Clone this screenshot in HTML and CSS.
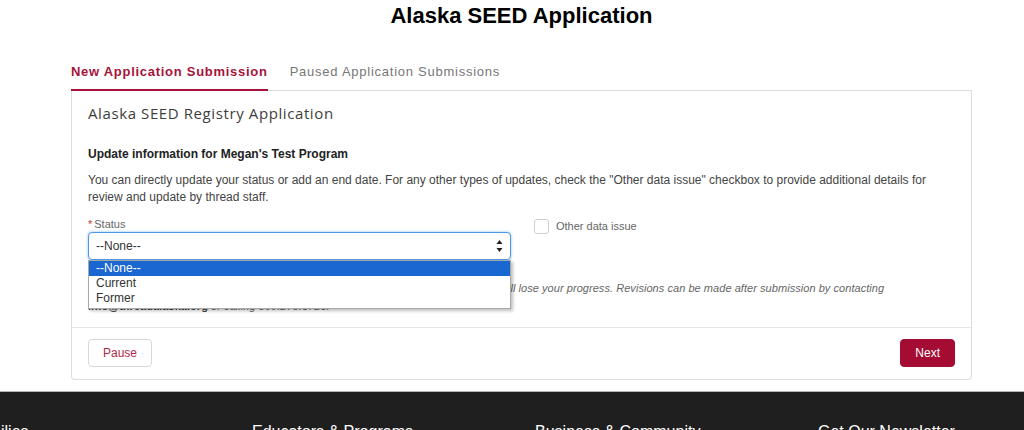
FILE: index.html
```html
<!DOCTYPE html>
<html lang="en">
<head>
<meta charset="utf-8">
<title>Alaska SEED Application</title>
<link rel="stylesheet" href="styles.css">
</head>
<body>
<div class="page">
  <h1 class="page-title">Alaska SEED Application</h1>
  <nav class="tabs">
    <a class="tab tab-active">New Application Submission</a>
    <a class="tab">Paused Application Submissions</a>
  </nav>
  <section class="card">
    <header class="card-header">
      <h2 class="card-title">Alaska SEED Registry Application</h2>
    </header>
    <div class="card-body">
      <h3 class="section-title">Update information for Megan's Test Program</h3>
      <p class="intro">You can directly update your status or add an end date. For any other types of updates, check the "Other data issue" checkbox to provide additional details for review and update by thread staff.</p>
      <div class="form-row">
        <div class="field">
          <div class="field-label"><span class="req">*</span>Status</div>
          <div class="select-wrap">
            <div class="select">
              <span>--None--</span>
              <svg class="select-arrows" width="7" height="14" viewBox="0 0 7 14"><path d="M3.5 1 L6.5 5 L0.5 5 Z" fill="#222"/><path d="M0.5 9 L6.5 9 L3.5 13 Z" fill="#222"/></svg>
            </div>
            <ul class="dropdown">
              <li class="option option-selected">--None--</li>
              <li class="option">Current</li>
              <li class="option">Former</li>
            </ul>
          </div>
        </div>
        <div class="field field-check">
          <span class="checkbox"></span>
          <span class="check-label">Other data issue</span>
        </div>
      </div>
      <p class="note">If you navigate away from the page before pausing or submitting the form, then you will lose your progress. Revisions can be made after submission by contacting <b>info@threadalaska.org</b> or calling 800.278.3723.</p>
    </div>
    <footer class="card-footer">
      <button class="btn btn-outline">Pause</button>
      <button class="btn btn-primary">Next</button>
    </footer>
  </section>
</div>
<footer class="site-footer">
  <div class="footer-cols">
    <div class="footer-col">Families</div>
    <div class="footer-col">Educators &amp; Programs</div>
    <div class="footer-col">Business &amp; Community</div>
    <div class="footer-col">Get Our Newsletter</div>
  </div>
</footer>
</body>
</html>
```

FILE: styles.css
```css
html, body {
  margin: 0;
  padding: 0;
  background: #fff;
  overflow: hidden;
}
body {
  font-family: "Liberation Sans", Arial, sans-serif;
  color: #444;
  width: 1024px;
  height: 430px;
}
.page {
  margin-left: 71px;
  width: 901px;
}
.page-title {
  margin: 0;
  padding-top: 3px;
  font-size: 22px;
  line-height: 26px;
  font-weight: bold;
  color: #000;
  text-align: center;
}
.tabs {
  margin-top: 35px;
  display: flex;
  gap: 22px;
  border-bottom: 1px solid #dcdcdc;
}
.tab {
  font-size: 13px;
  line-height: 16px;
  padding-bottom: 9px;
  margin-bottom: -1px;
  color: #777;
  letter-spacing: 0.75px;
  border-bottom: 2px solid transparent;
}
.tab-active {
  font-weight: bold;
  color: #a6133a;
  letter-spacing: 0.72px;
  border-bottom-color: #a6133a;
}
.card {
  border: 1px solid #dddddd;
  border-top: none;
  border-radius: 0 0 4px 4px;
  background: #fff;
}
.card-header {
  padding: 12px 16px 0;
}
.card-title {
  margin: 0;
  font-family: "Open Sans", "Liberation Sans", sans-serif;
  font-weight: normal;
  font-size: 15px;
  line-height: 20px;
  letter-spacing: 0.6px;
  color: #3e3e3c;
}
.card-body {
  padding: 23px 16px 12px;
}
.section-title {
  margin: 0 0 9px;
  font-size: 12px;
  line-height: 17px;
  font-weight: bold;
  color: #222;
}
.intro {
  margin: 0;
  font-size: 12px;
  line-height: 17px;
  color: #444;
}
.form-row {
  margin-top: 11px;
  display: grid;
  grid-template-columns: 423px 423px;
  column-gap: 23px;
}
.field-label {
  font-size: 11px;
  line-height: 14px;
  color: #666;
  margin-bottom: 1px;
}
.req {
  color: #c23934;
  margin-right: 2px;
}
.select-wrap {
  position: relative;
}
.select {
  box-sizing: border-box;
  height: 28px;
  border: 1px solid #4f98e3;
  border-radius: 4px;
  box-shadow: 0 0 3px #8cc0f2;
  padding: 0 7px 0 7px;
  display: flex;
  align-items: center;
  justify-content: space-between;
  font-size: 12px;
  color: #333;
  background: #fff;
}
.select-arrows {
  display: block;
}
.dropdown {
  position: absolute;
  top: 100%;
  left: 0;
  right: 0;
  margin: 0;
  padding: 0 0 2px;
  list-style: none;
  background: #fff;
  border: 1px solid #a8a8a8;
  box-shadow: 2px 2px 3px rgba(0, 0, 0, 0.25);
  z-index: 5;
}
.option {
  font-size: 12px;
  line-height: 15px;
  padding-left: 7px;
  color: #333;
}
.option-selected {
  background: #1a67d2;
  color: #fff;
}
.field-check {
  display: flex;
  align-items: center;
  gap: 7px;
  margin-top: 2px;
  align-self: start;
}
.checkbox {
  box-sizing: border-box;
  width: 15px;
  height: 15px;
  border: 1px solid #cfcfcf;
  border-radius: 3px;
  background: #fff;
}
.check-label {
  font-size: 11px;
  line-height: 14px;
  color: #666;
  margin-top: -2px;
}
.note {
  margin: 19px 0 0;
  font-size: 11px;
  line-height: 18px;
  font-style: italic;
  letter-spacing: 0.05px;
  color: #666;
}
.note b {
  font-style: normal;
  color: #444;
}
.card-footer {
  border-top: 1px solid #e6e6e6;
  padding: 11px 16px 12px;
  display: flex;
  justify-content: space-between;
}
.btn {
  height: 28px;
  font-family: "Liberation Sans", Arial, sans-serif;
  font-size: 12px;
  border-radius: 4px;
  padding: 0 14px;
  cursor: pointer;
}
.btn-outline {
  background: #fff;
  border: 1px solid #d8d8d8;
  color: #b02a4a;
}
.btn-primary {
  background: #a50c34;
  border: 1px solid #a50c34;
  color: #fff;
}
.site-footer {
  margin-top: 11px;
  height: 60px;
  background: #1f1f1f;
  border-top: 1px solid #b5b5b5;
  overflow: hidden;
}
.footer-cols {
  display: grid;
  grid-template-columns: repeat(4, 283px);
  margin-left: -31px;
  padding-top: 31px;
}
.footer-col {
  font-size: 16px;
  line-height: 18px;
  color: #fff;
}
```
